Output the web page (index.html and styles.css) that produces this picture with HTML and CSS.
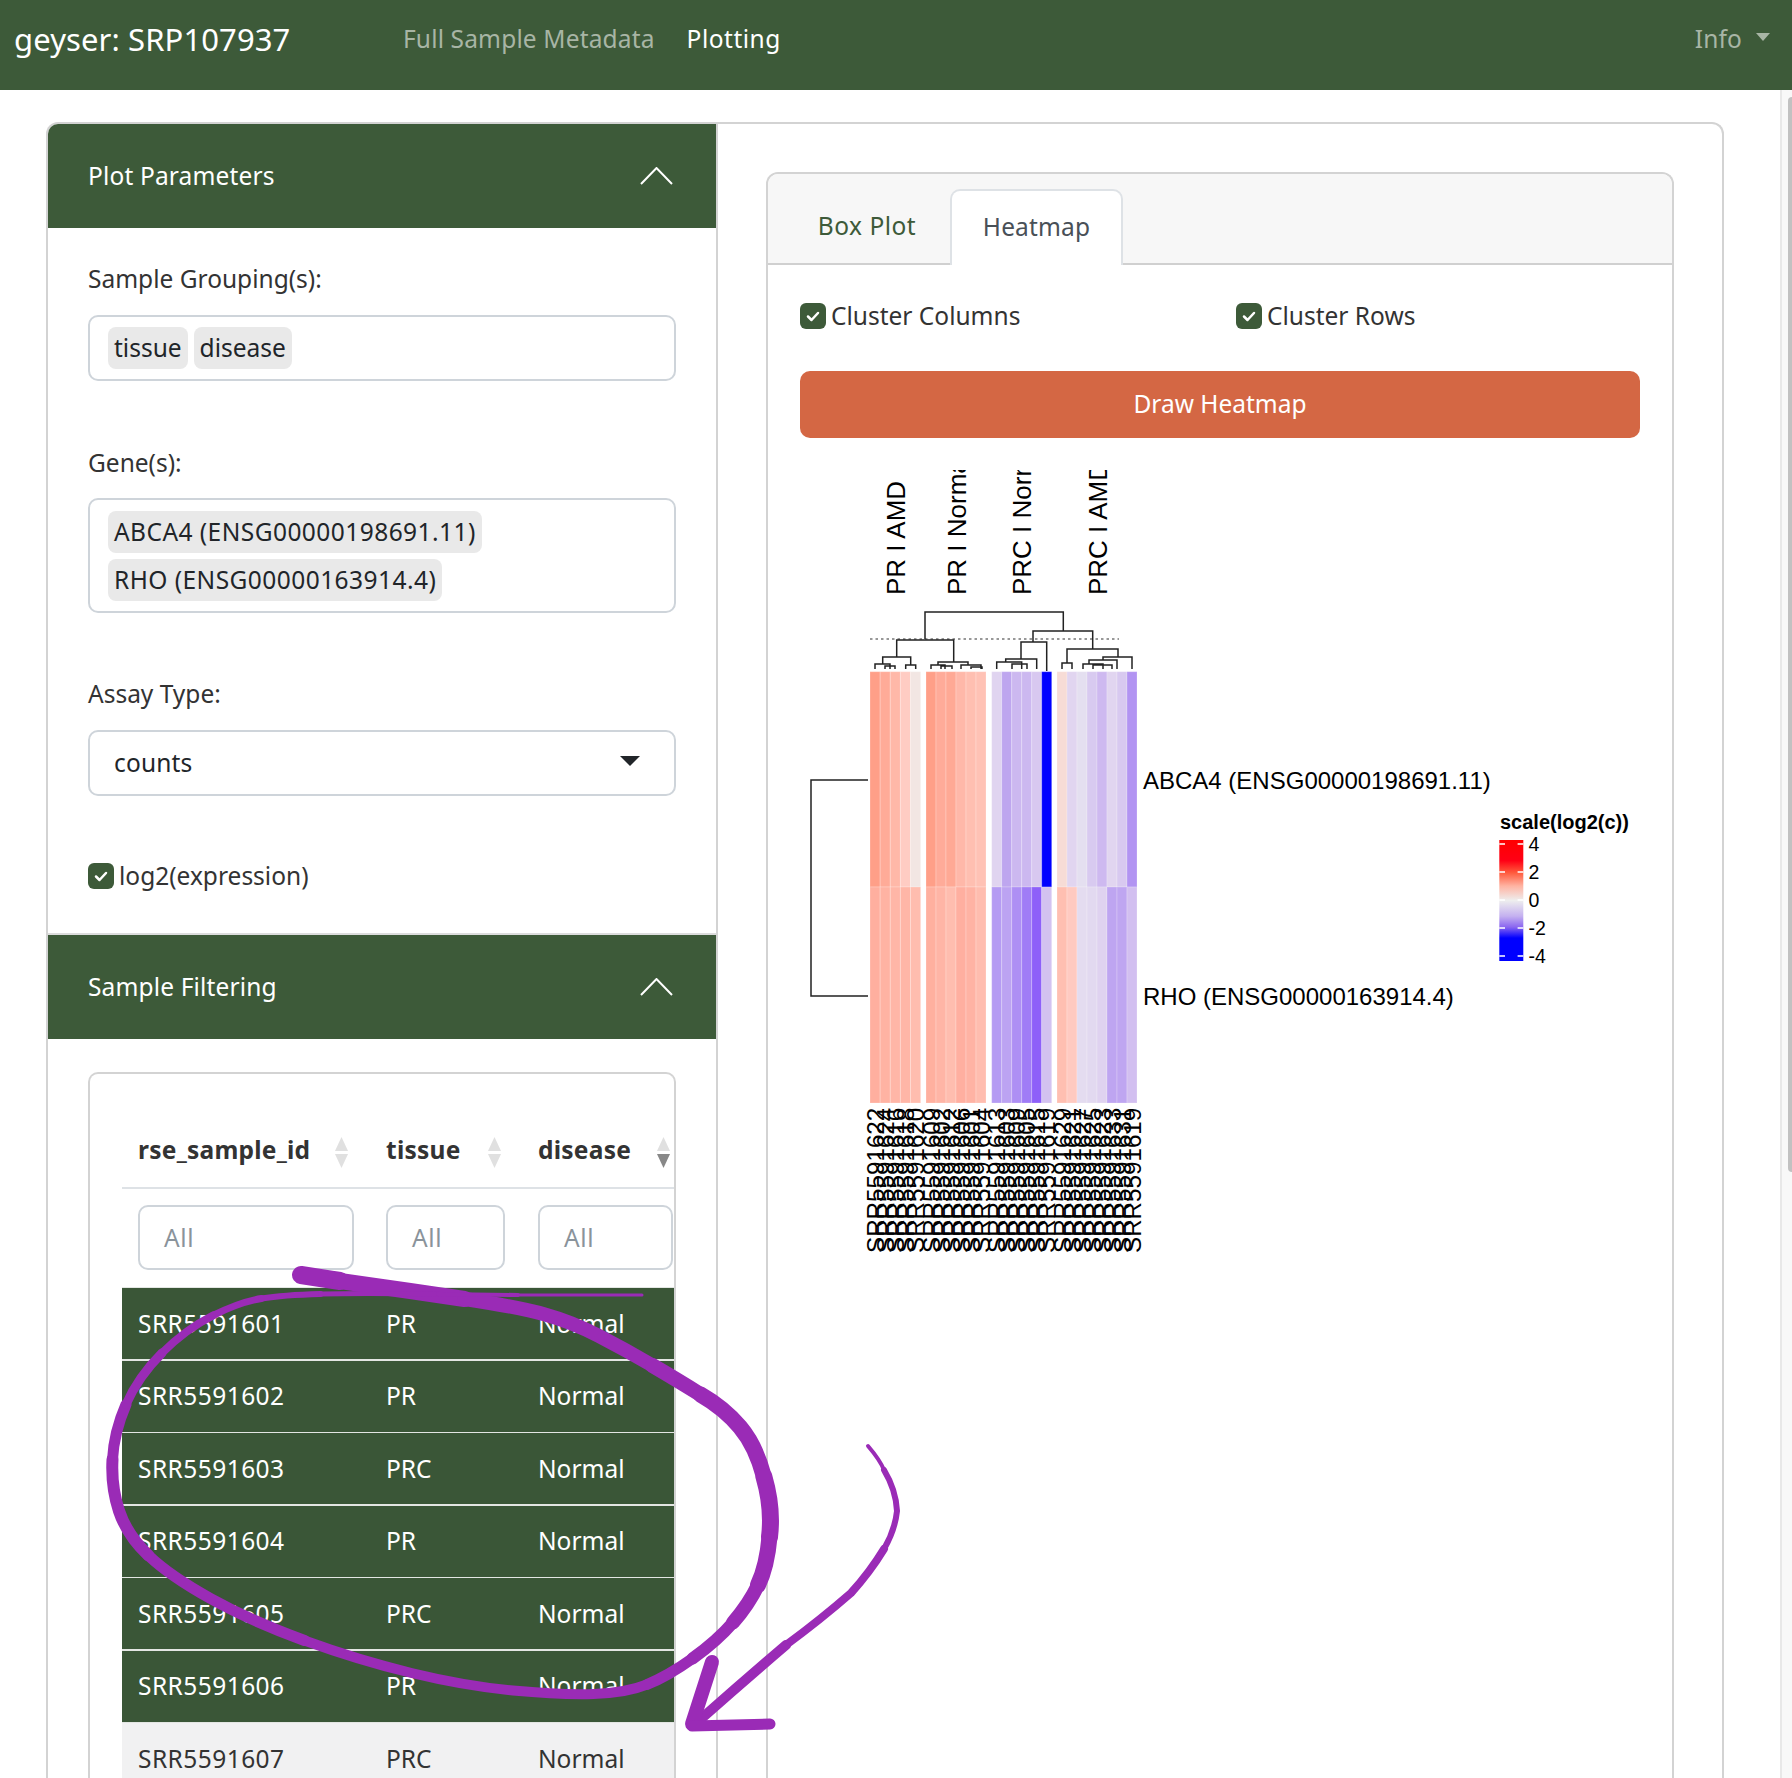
FILE: index.html
```html
<!doctype html>
<html lang="en">
<head>
<meta charset="utf-8">
<title>geyser: SRP107937</title>
<link rel="stylesheet" href="styles.css">
</head>
<body>
<header class="navbar">
  <div class="brand">geyser: SRP107937</div>
  <nav class="nav-links">
    <a class="nav-link">Full Sample Metadata</a>
    <a class="nav-link active">Plotting</a>
  </nav>
  <a class="nav-link info">Info<span class="nav-caret"></span></a>
</header>

<main class="page">
  <div class="outer-card">
    <aside class="sidebar">
      <div class="section-head">
        <span>Plot Parameters</span>
        <svg class="chevron" width="33" height="18" viewBox="0 0 33 18"><polyline points="1,17 16.500,1 32,17"/></svg>
      </div>
      <div class="form">
        <label class="field-label">Sample Grouping(s):</label>
        <div class="select-box">
          <span class="pill pill-word">tissue</span><span class="pill pill-word">disease</span>
        </div>
        <label class="field-label">Gene(s):</label>
        <div class="select-box select-box-multi">
          <span class="pill">ABCA4 (ENSG00000198691.11)</span>
          <span class="pill">RHO (ENSG00000163914.4)</span>
        </div>
        <label class="field-label">Assay Type:</label>
        <div class="select-box select-box-single">
          <span class="select-value">counts</span><span class="select-caret"></span>
        </div>
        <div class="check-row check-row-log">
          <svg class="check" viewBox="0 0 26 26"><rect width="26" height="26" rx="6"/><polyline points="8,13.500 11.500,17 18,10"/></svg>
          <span>log2(expression)</span>
        </div>
      </div>
      <div class="section-head">
        <span>Sample Filtering</span>
        <svg class="chevron" width="33" height="18" viewBox="0 0 33 18"><polyline points="1,17 16.500,1 32,17"/></svg>
      </div>
      <div class="table-wrap">
        <div class="table-card">
          <div class="trow thead">
            <div class="th th-a">rse_sample_id<svg class="sort" width="13" height="31" viewBox="0 0 13 31"><path class="sort-off" d="M6.500 0 13 14H0z"/><path class="sort-off" d="M0 17h13L6.500 31z"/></svg></div>
            <div class="th th-b">tissue<svg class="sort" width="13" height="31" viewBox="0 0 13 31"><path class="sort-off" d="M6.500 0 13 14H0z"/><path class="sort-off" d="M0 17h13L6.500 31z"/></svg></div>
            <div class="th th-c">disease<svg class="sort" width="13" height="31" viewBox="0 0 13 31"><path class="sort-off" d="M6.500 0 13 14H0z"/><path class="sort-on" d="M0 17h13L6.500 31z"/></svg></div>
          </div>
          <div class="trow tfilter">
            <div class="tf"><div class="filter filter-a">All</div></div>
            <div class="tf"><div class="filter filter-b">All</div></div>
            <div class="tf"><div class="filter filter-c">All</div></div>
          </div>
          <div class="tbody">
            <div class="trow tr selected"><div class="td td-id">SRR5591601</div><div class="td">PR</div><div class="td">Normal</div></div>
            <div class="trow tr selected"><div class="td td-id">SRR5591602</div><div class="td">PR</div><div class="td">Normal</div></div>
            <div class="trow tr selected"><div class="td td-id">SRR5591603</div><div class="td">PRC</div><div class="td">Normal</div></div>
            <div class="trow tr selected"><div class="td td-id">SRR5591604</div><div class="td">PR</div><div class="td">Normal</div></div>
            <div class="trow tr selected"><div class="td td-id">SRR5591605</div><div class="td">PRC</div><div class="td">Normal</div></div>
            <div class="trow tr selected"><div class="td td-id">SRR5591606</div><div class="td">PR</div><div class="td">Normal</div></div>
            <div class="trow tr"><div class="td td-id">SRR5591607</div><div class="td">PRC</div><div class="td">Normal</div></div>
          </div>
        </div>
      </div>
    </aside>

    <section class="content">
      <div class="tab-card">
        <div class="tabs">
          <a class="tab tab-box">Box Plot</a>
          <a class="tab tab-heat">Heatmap</a>
        </div>
        <div class="pane">
          <div class="cluster-row">
            <div class="check-row">
              <svg class="check" viewBox="0 0 26 26"><rect width="26" height="26" rx="6"/><polyline points="8,13.500 11.500,17 18,10"/></svg>
              <span>Cluster Columns</span>
            </div>
            <div class="check-row">
              <svg class="check" viewBox="0 0 26 26"><rect width="26" height="26" rx="6"/><polyline points="8,13.500 11.500,17 18,10"/></svg>
              <span>Cluster Rows</span>
            </div>
          </div>
          <button class="draw-btn">Draw Heatmap</button>

          <svg class="plot" width="840" height="800" viewBox="800 460 840 800">
            <defs>
              <clipPath id="labelclip"><rect x="860" y="470" width="270" height="130"/></clipPath>
              <linearGradient id="legendramp" x1="0" y1="0" x2="0" y2="1">
                <stop offset="0" stop-color="#ff0000"/>
                <stop offset="0.17" stop-color="#ff0015"/>
                <stop offset="0.27" stop-color="#ff5a3c"/>
                <stop offset="0.38" stop-color="#ffb3a2"/>
                <stop offset="0.5" stop-color="#eeeeee"/>
                <stop offset="0.63" stop-color="#c4b0f0"/>
                <stop offset="0.72" stop-color="#8a66f0"/>
                <stop offset="0.81" stop-color="#0000ff"/>
                <stop offset="1" stop-color="#0000ff"/>
              </linearGradient>
            </defs>

            <g clip-path="url(#labelclip)" class="plot-text column-titles">
              <text transform="translate(905 595) rotate(-90)">PR I AMD</text>
              <text transform="translate(965.700 595) rotate(-90)">PR I Normal</text>
              <text transform="translate(1031 595) rotate(-90)">PRC I Normal</text>
              <text transform="translate(1107 595) rotate(-90)">PRC I AMD</text>
            </g>

            <line class="cut" x1="870" y1="639" x2="1119" y2="639"/>
            <path class="dendro" d="M925 639V612H1063.300V631M896.700 657V640H953.700V662M1033 642V631H1092.700V649M1021 659V642H1046.700V671M1005.700 662V659H1036.700V669M996.700 669V662H1021.700V669M1012 669V664H1027V669"/>
            <path class="dendro" d="M1067 663V649H1118V657M1062 669V663H1072V669M1103 660V657H1132V669M1089 664V660H1117V669M1083 669V664H1103V669M1093 669V665H1112V669"/>
            <path class="dendro" d="M882.700 664V657H910.700V665M875 669V664H890V669M885 669V666H895V669M905.700 669V665H915.700V669"/>
            <path class="dendro" d="M938 665V662H968V665M931 669V665H945V669M941 669V666H952V669M961 669V665H981V669M971 669V667H982V669"/>
            <path class="dendro" d="M868 780H811V996H868"/>

            <g class="cells">
              <rect x="870" y="671.700" width="10.130" height="215.300" fill="#ff9f88"/><rect x="880.130" y="671.700" width="10.130" height="215.300" fill="#ffab98"/><rect x="890.260" y="671.700" width="10.130" height="215.300" fill="#ffb8a8"/><rect x="900.390" y="671.700" width="10.130" height="215.300" fill="#ffccc3"/><rect x="910.520" y="671.700" width="10.130" height="215.300" fill="#f2e6e3"/>
              <rect x="926" y="671.700" width="10" height="215.300" fill="#ff9f88"/><rect x="936" y="671.700" width="10" height="215.300" fill="#ffab99"/><rect x="946" y="671.700" width="10" height="215.300" fill="#ffa995"/><rect x="956" y="671.700" width="10" height="215.300" fill="#ffb8a9"/><rect x="966" y="671.700" width="10" height="215.300" fill="#ffbfb1"/><rect x="976" y="671.700" width="10" height="215.300" fill="#ffc2b5"/>
              <rect x="991.700" y="671.700" width="10" height="215.300" fill="#e0d4f0"/><rect x="1001.700" y="671.700" width="10" height="215.300" fill="#bea6ef"/><rect x="1011.700" y="671.700" width="10" height="215.300" fill="#ccb8f0"/><rect x="1021.700" y="671.700" width="10" height="215.300" fill="#ccb8f0"/><rect x="1031.700" y="671.700" width="10" height="215.300" fill="#d8c8f0"/><rect x="1041.700" y="671.700" width="10" height="215.300" fill="#0000ff"/>
              <rect x="1057" y="671.700" width="10" height="215.300" fill="#f7dcd6"/><rect x="1067" y="671.700" width="10" height="215.300" fill="#e1d5f0"/><rect x="1077" y="671.700" width="10" height="215.300" fill="#e4dff0"/><rect x="1087" y="671.700" width="10" height="215.300" fill="#d8caf0"/><rect x="1097" y="671.700" width="10" height="215.300" fill="#ceb9f0"/><rect x="1107" y="671.700" width="10" height="215.300" fill="#e1d5f0"/><rect x="1117" y="671.700" width="10" height="215.300" fill="#d8c9f0"/><rect x="1127" y="671.700" width="10" height="215.300" fill="#b294f2"/>

              <rect x="870" y="887" width="10.130" height="216" fill="#ffaf9f"/><rect x="880.130" y="887" width="10.130" height="216" fill="#ffb3a3"/><rect x="890.260" y="887" width="10.130" height="216" fill="#ffb6a7"/><rect x="900.390" y="887" width="10.130" height="216" fill="#ffb6a7"/><rect x="910.520" y="887" width="10.130" height="216" fill="#ffbdaf"/>
              <rect x="926" y="887" width="10" height="216" fill="#ffb09f"/><rect x="936" y="887" width="10" height="216" fill="#ffb5a6"/><rect x="946" y="887" width="10" height="216" fill="#ffbdaf"/><rect x="956" y="887" width="10" height="216" fill="#ffafa0"/><rect x="966" y="887" width="10" height="216" fill="#ffb3a4"/><rect x="976" y="887" width="10" height="216" fill="#ffbdaf"/>
              <rect x="991.700" y="887" width="10" height="216" fill="#b59bf3"/><rect x="1001.700" y="887" width="10" height="216" fill="#bca3f2"/><rect x="1011.700" y="887" width="10" height="216" fill="#ae8ff4"/><rect x="1021.700" y="887" width="10" height="216" fill="#a07cf6"/><rect x="1031.700" y="887" width="10" height="216" fill="#8e60f9"/><rect x="1041.700" y="887" width="10" height="216" fill="#d3c2f0"/>
              <rect x="1057" y="887" width="10" height="216" fill="#ffbfb1"/><rect x="1067" y="887" width="10" height="216" fill="#ffcac1"/><rect x="1077" y="887" width="10" height="216" fill="#e4dcf0"/><rect x="1087" y="887" width="10" height="216" fill="#e2d9f0"/><rect x="1097" y="887" width="10" height="216" fill="#dfd2f0"/><rect x="1107" y="887" width="10" height="216" fill="#bea5f1"/><rect x="1117" y="887" width="10" height="216" fill="#bfa6f1"/><rect x="1127" y="887" width="10" height="216" fill="#d2bff0"/>
            </g>

            <g class="plot-text row-labels">
              <text x="1143" y="789">ABCA4 (ENSG00000198691.11)</text>
              <text x="1143" y="1005">RHO (ENSG00000163914.4)</text>
            </g>

            <g class="plot-text sample-labels">
              <text transform="translate(883.500 1253) rotate(-90)">SRR5591622</text>
              <text transform="translate(893.600 1253) rotate(-90)">SRR5591624</text>
              <text transform="translate(903.700 1253) rotate(-90)">SRR5591616</text>
              <text transform="translate(913.900 1253) rotate(-90)">SRR5591618</text>
              <text transform="translate(924 1253) rotate(-90)">SRR5591620</text>
              <text transform="translate(939.500 1253) rotate(-90)">SRR5591609</text>
              <text transform="translate(949.500 1253) rotate(-90)">SRR5591602</text>
              <text transform="translate(959.500 1253) rotate(-90)">SRR5591612</text>
              <text transform="translate(969.500 1253) rotate(-90)">SRR5591606</text>
              <text transform="translate(979.500 1253) rotate(-90)">SRR5591601</text>
              <text transform="translate(989.500 1253) rotate(-90)">SRR5591604</text>
              <text transform="translate(1005.200 1253) rotate(-90)">SRR5591613</text>
              <text transform="translate(1015.200 1253) rotate(-90)">SRR5591603</text>
              <text transform="translate(1025.200 1253) rotate(-90)">SRR5591609</text>
              <text transform="translate(1035.200 1253) rotate(-90)">SRR5591605</text>
              <text transform="translate(1045.200 1253) rotate(-90)">SRR5591615</text>
              <text transform="translate(1055.200 1253) rotate(-90)">SRR5591619</text>
              <text transform="translate(1070.500 1253) rotate(-90)">SRR5591629</text>
              <text transform="translate(1080.500 1253) rotate(-90)">SRR5591621</text>
              <text transform="translate(1090.500 1253) rotate(-90)">SRR5591627</text>
              <text transform="translate(1100.500 1253) rotate(-90)">SRR5591625</text>
              <text transform="translate(1110.500 1253) rotate(-90)">SRR5591623</text>
              <text transform="translate(1120.500 1253) rotate(-90)">SRR5591633</text>
              <text transform="translate(1130.500 1253) rotate(-90)">SRR5591631</text>
              <text transform="translate(1140.500 1253) rotate(-90)">SRR5591619</text>
            </g>

            <text class="legend-title" x="1500" y="829">scale(log2(c))</text>
            <rect x="1499.300" y="840" width="24" height="121" fill="url(#legendramp)"/>
            <path class="legend-tick" d="M1499.300 844H1505M1517.600 844H1523.300M1499.300 872H1505M1517.600 872H1523.300M1499.300 900H1505M1517.600 900H1523.300M1499.300 928H1505M1517.600 928H1523.300M1499.300 956H1505M1517.600 956H1523.300"/>
            <g class="legend-text">
              <text x="1528.500" y="850.500">4</text>
              <text x="1528.500" y="878.500">2</text>
              <text x="1528.500" y="906.500">0</text>
              <text x="1528.500" y="934.500">-2</text>
              <text x="1528.500" y="962.500">-4</text>
            </g>
          </svg>
        </div>
      </div>
    </section>
  </div>
</main>

<div class="scroll-track"><div class="scroll-thumb"></div></div>

<svg class="ink" width="1792" height="1778" viewBox="0 0 1792 1778">
  <g class="ink-strokes">
    <path stroke-width="18" d="M301 1275 340 1281"/>
    <path stroke-width="16" d="M340 1281 357.500 1283.500Q411 1291 464.500 1299"/>
    <path stroke-width="14" d="M464.500 1299Q518 1307 545 1314.500Q572 1322 599 1336Q626 1350 652.500 1365.500"/>
    <path stroke-width="15" d="M652.500 1365.500Q679 1381 700.500 1394.500"/>
    <path stroke-width="16" d="M700.500 1394.500Q724 1408 740 1427Q756 1446 764 1477"/>
    <path stroke-width="17" d="M764 1477Q773 1508 769.500 1537"/>
    <path stroke-width="16" d="M769.500 1537Q767 1566 758 1585"/>
    <path stroke-width="14" d="M758 1585Q749 1604 733 1622.500"/>
    <path stroke-width="12" d="M733 1622.500Q717 1641 692.500 1658.500"/>
    <path stroke-width="11" d="M692.500 1658.500Q668 1676 647 1684.500"/>
    <path stroke-width="10" d="M647 1684.500Q626 1693 593.500 1694Q561 1695 513 1690.500Q465 1686 411.500 1673Q358 1660 304.500 1640.500"/>
    <path stroke-width="11" d="M304.500 1640.500Q251 1621 210.500 1598.500Q170 1576 148.500 1555.500"/>
    <path stroke-width="12" d="M148.500 1555.500Q127 1535 119 1511Q111 1487 112.500 1459.500"/>
    <path stroke-width="11" d="M112.500 1459.500Q114 1432 126 1404.500"/>
    <path stroke-width="9" d="M126 1404.500Q138 1377 162 1353"/>
    <path stroke-width="8" d="M162 1353Q186 1329 213 1315.500"/>
    <path stroke-width="7" d="M213 1315.500Q240 1302 261.500 1298.500"/>
    <path stroke-width="6" d="M261.500 1298.500Q283 1295 320.500 1294"/>
    <path stroke-width="5" d="M320.500 1294Q358 1293 438 1294"/>
    <path stroke-width="4" d="M438 1294 518 1295"/>
    <path stroke-width="3" d="M518 1295 642 1295"/>
    <path stroke-width="4" d="M868 1446Q880 1460 884 1470"/>
    <path stroke-width="6" d="M884 1470Q896 1490 897 1511Q895 1530 884 1549"/>
    <path stroke-width="8" d="M884 1549Q870 1572 851 1593Q820 1620 786 1645"/>
    <path stroke-width="10" d="M786 1645Q745 1680 702 1718"/>
    <path stroke-width="14" d="M712 1662 692 1724"/>
    <path stroke-width="11" d="M692 1726 770 1724"/>
  </g>
</svg>
</body>
</html>
```
FILE: styles.css
```css
* { box-sizing: border-box; }
html, body { margin: 0; height: 100%; }
body {
  position: relative;
  height: 1778px;
  overflow: hidden;
  background: #fff;
  color: #333;
  font-family: "Noto Sans", sans-serif;
  font-size: 24.5px;
  line-height: 36px;
  letter-spacing: .15px;
}

/* navbar */
.navbar {
  height: 90px;
  background: #3d5a39;
  display: flex;
  align-items: center;
  padding: 0 22px 12px 14px;
  color: #fff;
}
.brand { font-size: 31px; width: 389px; white-space: nowrap; letter-spacing: .1px; }
.nav-links { display: flex; gap: 32px; flex: 1; }
.nav-link { color: #a8b5a5; white-space: nowrap; }
.nav-link.active { color: #fff; letter-spacing: .5px; }
.info { display: flex; align-items: center; }
.nav-caret {
  margin-left: 14px;
  margin-top: -4px;
  border-top: 8px solid #a8b5a5;
  border-left: 7.500px solid transparent;
  border-right: 7.500px solid transparent;
}

/* page */
.page { height: 1688px; padding: 32px 68px 0 46px; overflow: hidden; }
.outer-card {
  display: flex;
  height: 1656px;
  border: 2px solid #d3d3d3;
  border-bottom: 0;
  border-radius: 12px 12px 0 0;
  overflow: hidden;
}

/* sidebar */
.sidebar { width: 670px; flex: none; border-right: 2px solid #d3d3d3; overflow: hidden; }
.section-head {
  height: 104px;
  background: #3d5a39;
  color: #fff;
  display: flex;
  align-items: center;
  justify-content: space-between;
  padding: 0 43px 0 40px;
}
.chevron polyline { fill: none; stroke: #fff; stroke-width: 2; }

.form {
  padding: 33px 40px 39px;
  border-bottom: 2px solid #dcdcdc;
}
.field-label { display: block; height: 36px; margin-bottom: 18px; letter-spacing: 0; }
.select-box {
  width: 588px;
  height: 66px;
  margin-bottom: 64px;
  border: 2px solid #ced4da;
  border-radius: 10px;
  padding: 10px 18px;
  display: flex;
  flex-wrap: wrap;
  align-items: center;
  align-content: center;
  gap: 6px;
  color: #212529;
}
.select-box-multi { height: 115px; margin-top: -1px; margin-bottom: 63px; }
.select-box-single { justify-content: space-between; padding: 0 34px 0 24px; margin-bottom: 62px; }
.pill {
  height: 42px;
  line-height: 42px;
  padding: 0 6px;
  border-radius: 8px;
  background: #e9e9e9;
  white-space: nowrap;
  letter-spacing: .45px;
}
.pill-word { letter-spacing: 0; }
.select-caret {
  margin-top: -4px;
  border-top: 10px solid #212529;
  border-left: 10px solid transparent;
  border-right: 10px solid transparent;
}
.check-row { display: flex; align-items: center; gap: 5px; height: 36px; letter-spacing: 0; }
.check { width: 26px; height: 26px; flex: none; }
.check rect { fill: #3d5a39; }
.check polyline { fill: none; stroke: #fff; stroke-width: 2.500; stroke-linecap: round; stroke-linejoin: round; }

/* table */
.table-wrap { padding: 33px 0 0 40px; }
.table-card {
  width: 588px;
  border: 2px solid #d3d3d3;
  border-radius: 10px 10px 0 0;
  border-bottom: 0;
  padding: 44px 0 0 32px;
  color: #fff;
}
.trow { display: grid; grid-template-columns: 248px 152px 152px; }
.thead { height: 71px; border-bottom: 2px solid #dee2e6; color: #333; font-weight: 700; }
.th { display: flex; align-items: center; justify-content: space-between; padding-left: 16px; padding-bottom: 5px; letter-spacing: .25px; }
.th-a { padding-right: 22px; }
.th-b { padding-right: 21px; }
.th-c { padding-right: 4px; }
.sort { margin-top: 5px; }
.sort-off { fill: #e0e0e0; }
.sort-on { fill: #888; }
.tfilter { height: 98px; padding-top: 16px; }
.filter {
  height: 65px;
  line-height: 62px;
  border: 2px solid #ced4da;
  border-radius: 10px;
  padding-left: 24px;
  color: #8a939b;
  letter-spacing: .6px;
}
.tf { padding-left: 16px; }
.filter-a { width: 216px; }
.filter-b { width: 119px; }
.filter-c { width: 135px; }
.tbody { display: flex; flex-direction: column; gap: 1.500px; padding-top: 1px; background: #e3e6e3; }
.tr { height: 71px; background: #f1f1f2; color: #333; align-items: center; }
.tr.selected { background: #3a5637; color: #fff; }
.td { padding-left: 16px; letter-spacing: 0; }
.td-id { letter-spacing: .45px; }

/* content */
.content { flex: 1; height: 1654px; padding: 48px 48px 0 48px; overflow: hidden; }
.tab-card {
  height: 1606px;
  border: 2px solid #d3d3d3;
  border-bottom: 0;
  border-radius: 12px 12px 0 0;
}
.tabs {
  height: 91px;
  display: flex;
  align-items: flex-end;
  padding-left: 16px;
  background: #f7f7f7;
  border-bottom: 2px solid #d0d0d0;
  border-radius: 10px 10px 0 0;
}
.tab { display: flex; align-items: center; justify-content: center; height: 76px; margin-bottom: -2px; padding-bottom: 2px; }
.tab-box { width: 166px; color: #3d5a39; letter-spacing: .5px; }
.tab-heat {
  width: 173px;
  color: #495057;
  background: #fff;
  border: 2px solid #dee2e6;
  border-bottom: 0;
  border-radius: 10px 10px 0 0;
}
.pane { padding: 33px 0 0 32px; }
.cluster-row { display: grid; grid-template-columns: 436px 1fr; }
.draw-btn {
  display: block;
  width: 840px;
  height: 67px;
  margin-top: 37px;
  padding: 0 0 2px;
  border: 0;
  border-radius: 10px;
  background: #d46744;
  color: #fff;
  font: inherit;
  letter-spacing: 0;
}
.plot { display: block; margin-top: 22px; overflow: visible; letter-spacing: 0; }
.plot-text { font-family: "Liberation Sans", Arial, sans-serif; fill: #000; }
.column-titles text { font-size: 26px; }
.row-labels text { font-size: 24px; }
.sample-labels text { font-size: 24.200px; }
.cut { stroke: #777; stroke-width: 1.300; stroke-dasharray: 2.500 3; }
.dendro { fill: none; stroke: #222; stroke-width: 1.500; }
.cells rect { stroke: #fff; stroke-opacity: .22; stroke-width: 1; }
.legend-title { font-family: "Liberation Sans", Arial, sans-serif; font-weight: 700; font-size: 20px; fill: #000; }
.legend-tick { stroke: #fff; stroke-width: 1.300; fill: none; }
.legend-text { font-family: "Liberation Sans", Arial, sans-serif; font-size: 19.500px; fill: #000; }

/* page scrollbar */
.scroll-track {
  position: absolute;
  top: 90px;
  right: 0;
  bottom: 0;
  width: 12px;
  background: #f8f8f8;
  border-left: 2px solid #e8e8e8;
}
.scroll-thumb {
  position: absolute;
  top: 7px;
  right: 0;
  width: 4px;
  height: 1075px;
  background: #c1c1c1;
  border-radius: 4px 0 0 4px;
}

/* hand-drawn annotation */
.ink { position: absolute; top: 0; left: 0; pointer-events: none; }
.ink-strokes path { fill: none; stroke: #9a2bb6; stroke-linecap: round; stroke-linejoin: round; }
```
